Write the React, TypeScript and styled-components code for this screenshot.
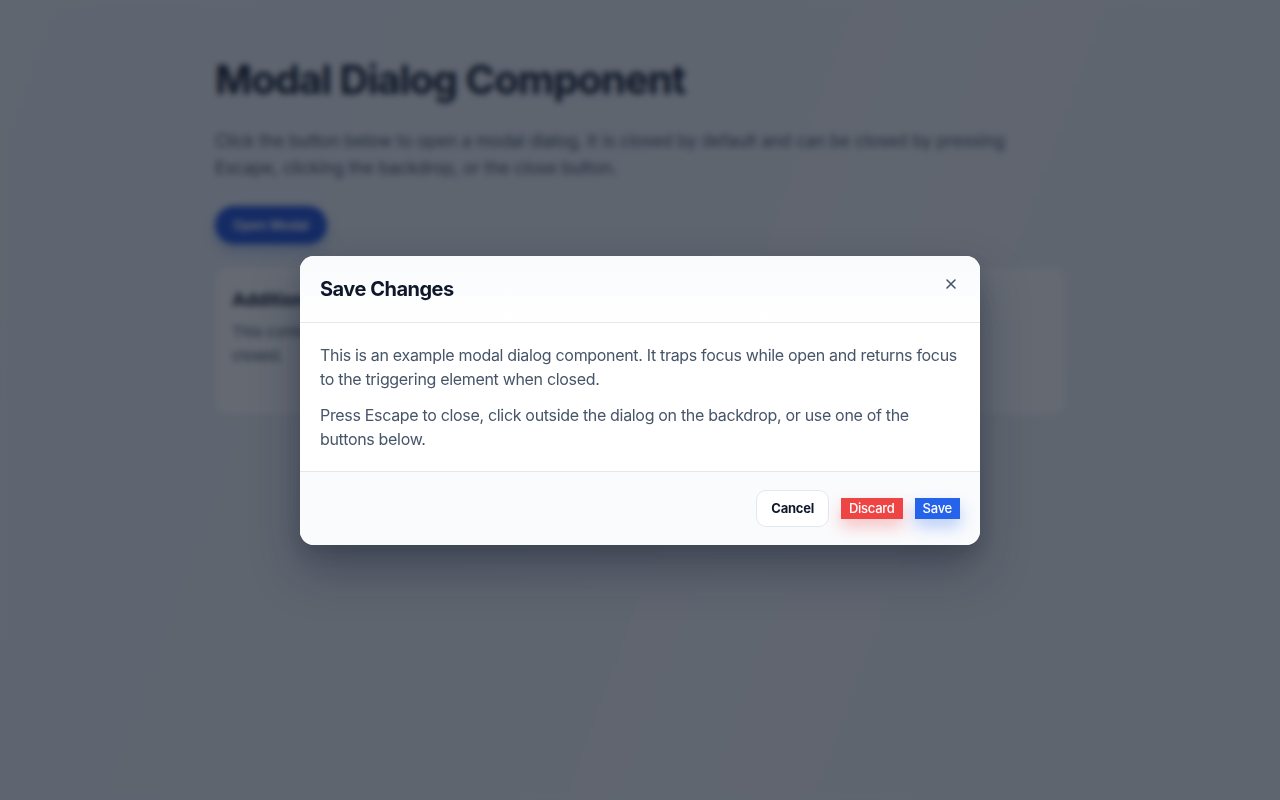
import React from "react";
import styled, { createGlobalStyle } from "styled-components";

const Global = createGlobalStyle`
  * { box-sizing: border-box; }
  html, body { margin: 0; padding: 0; }
  body {
    font-family: Inter, "Noto Sans", "Liberation Sans", sans-serif;
    background: linear-gradient(110deg, #f1f5f9 0%, #eef2f7 40%, #f3f5f8 60%, #eef2f7 100%);
    min-height: 800px;
    color: #0f172a;
  }
`;

const Page = styled.main`
  width: 850px;
  margin: 0 auto;
  padding: 56px 0 0;
  display: flex;
  flex-direction: column;
  align-items: flex-start;
`;

const Title = styled.h1`
  margin: 0;
  font-size: 40px;
  line-height: 48px;
  font-weight: 700;
  letter-spacing: -0.025em;
  color: #0f172a;
`;

const Lead = styled.p`
  margin: 24px 0 0;
  max-width: 820px;
  font-size: 17px;
  line-height: 27px;
  letter-spacing: -0.005em;
  color: #475569;
`;

const OpenButton = styled.button`
  margin-top: 24px;
  height: 38px;
  padding: 0 18px;
  border: none;
  border-radius: 999px;
  background: #1d4ed8;
  color: #fff;
  font: 600 13px Inter, sans-serif;
  box-shadow: 0 6px 14px rgba(37, 99, 235, 0.35);
`;

const Card = styled.section`
  margin-top: 24px;
  width: 100%;
  padding: 20px 17px 47px;
  border-radius: 12px;
  background: #fff;
  box-shadow: 0 1px 3px rgba(15, 23, 42, 0.08);
`;

const CardTitle = styled.h2`
  margin: 0;
  font-size: 18px;
  line-height: 24px;
  font-weight: 700;
`;

const CardText = styled.p`
  margin: 8px 0 0;
  max-width: 610px;
  font-size: 15px;
  line-height: 24px;
  color: #475569;
`;

const Overlay = styled.div`
  position: fixed;
  inset: 0;
  background: rgba(17, 24, 39, 0.65);
  backdrop-filter: blur(3px);
  display: flex;
  align-items: center;
  justify-content: center;
`;

const Dialog = styled.div`
  width: 680px;
  background: #fff;
  border-radius: 14px;
  overflow: hidden;
  box-shadow: 0 24px 48px rgba(15, 23, 42, 0.35), 0 8px 16px rgba(15, 23, 42, 0.15);
`;

const Header = styled.header`
  display: flex;
  justify-content: space-between;
  align-items: flex-start;
  padding: 20px 20px;
  border-bottom: 1px solid #e5e7eb;
  background: linear-gradient(180deg, #f8fafc 0%, #ffffff 100%);
`;

const DialogTitle = styled.h2`
  margin: 0;
  font-size: 20px;
  line-height: 26px;
  font-weight: 700;
  letter-spacing: -0.025em;
  color: #0f172a;
`;

const CloseButton = styled.button`
  width: 28px;
  height: 28px;
  margin: -6px -5px 0 0;
  border: none;
  background: transparent;
  display: flex;
  align-items: center;
  justify-content: center;
  color: #475569;
  padding: 0;
`;

const Body = styled.div`
  padding: 20px 20px 20px;
  display: flex;
  flex-direction: column;
  gap: 12px;
`;

const BodyText = styled.p`
  margin: 0;
  font-size: 16px;
  line-height: 24px;
  letter-spacing: -0.02em;
  color: #475569;
`;

const Footer = styled.footer`
  display: flex;
  justify-content: flex-end;
  align-items: center;
  gap: 12px;
  padding: 18px 20px;
  border-top: 1px solid #e5e7eb;
  background: #fafbfd;
`;

const CancelButton = styled.button`
  height: 37px;
  padding: 0 14px;
  border: 1px solid #e2e8f0;
  border-radius: 10px;
  background: #fff;
  color: #0f172a;
  font: 700 13px Inter, sans-serif;
  letter-spacing: -0.02em;
`;

const FlatButton = styled.button<{ $tone: "danger" | "primary" }>`
  height: 21px;
  padding: 0 8px;
  border: none;
  border-radius: 0;
  color: #fff;
  font: 500 13px Inter, sans-serif;
  letter-spacing: -0.02em;
  background: ${(p) => (p.$tone === "danger" ? "#ef4444" : "#2563eb")};
  box-shadow: ${(p) =>
    p.$tone === "danger"
      ? "0 8px 16px rgba(239, 68, 68, 0.3)"
      : "0 8px 16px rgba(37, 99, 235, 0.3)"};
`;

export default function App() {
  return (
    <>
      <Global />
      <Page>
        <Title>Modal Dialog Component</Title>
        <Lead>
          Click the button below to open a modal dialog. It is closed by default and can be closed by pressing
          Escape, clicking the backdrop, or the close button.
        </Lead>
        <OpenButton>Open Modal</OpenButton>
        <Card>
          <CardTitle>Additional Content</CardTitle>
          <CardText>
            This content stays behind the modal and becomes interactive again once the dialog is
            closed.
          </CardText>
        </Card>
      </Page>
      <Overlay>
        <Dialog role="dialog" aria-modal="true">
          <Header>
            <DialogTitle>Save Changes</DialogTitle>
            <CloseButton aria-label="Close">
              <svg width="12" height="12" viewBox="0 0 12 12" fill="none">
                <path d="M2 2L10 10M10 2L2 10" stroke="currentColor" strokeWidth="1.6" strokeLinecap="round" />
              </svg>
            </CloseButton>
          </Header>
          <Body>
            <BodyText>
              This is an example modal dialog component. It traps focus while open and returns focus to the triggering element when closed.
            </BodyText>
            <BodyText>
              Press Escape to close, click outside the dialog on the backdrop, or use one of the buttons below.
            </BodyText>
          </Body>
          <Footer>
            <CancelButton>Cancel</CancelButton>
            <FlatButton $tone="danger">Discard</FlatButton>
            <FlatButton $tone="primary">Save</FlatButton>
          </Footer>
        </Dialog>
      </Overlay>
    </>
  );
}
